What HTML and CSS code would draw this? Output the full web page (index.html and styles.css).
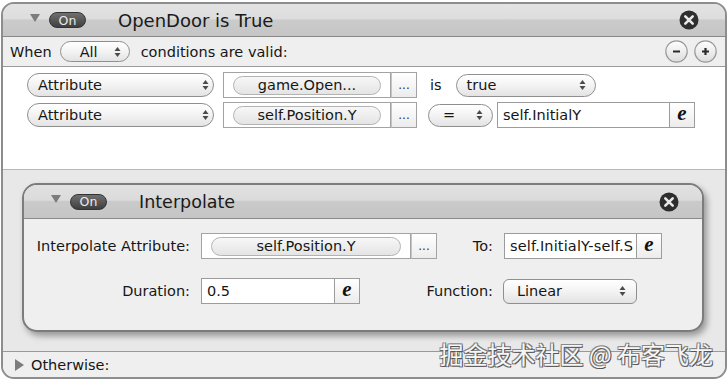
FILE: index.html
```html
<!DOCTYPE html>
<html>
<head>
<meta charset="utf-8">
<link rel="stylesheet" href="styles.css">
</head>
<body>
<div class="panel">
  <div class="hdr">
    <svg class="tri" width="10" height="8" viewBox="0 0 10 8"><path d="M0 0H10L5 8Z" fill="#7c7c7c"/></svg>
    <span class="on">On</span>
    <span class="title">OpenDoor is True</span>
    <svg class="close" width="20" height="20" viewBox="0 0 20 20"><circle cx="10" cy="10" r="9.5" fill="#2e2e2e"/><path d="M6.3 6.3L13.7 13.7M13.7 6.3L6.3 13.7" stroke="#e8e8e8" stroke-width="2.6" stroke-linecap="round"/></svg>
  </div>
  <div class="cond">
    <span>When</span>
    <div class="popup all"><span>All</span><svg class="arr" width="7" height="12" viewBox="0 0 7 12"><path d="M0.5 5L3.5 1L6.5 5Z M0.5 7L3.5 11L6.5 7Z" fill="#4a4a4a"/></svg></div>
    <span class="cv">conditions are valid:</span>
    <svg class="rb minus" width="23" height="23" viewBox="0 0 23 23"><defs><linearGradient id="g1" x1="0" y1="0" x2="0" y2="1"><stop offset="0" stop-color="#ffffff"/><stop offset="1" stop-color="#dcdcdc"/></linearGradient></defs><circle cx="11.5" cy="11.5" r="10.7" fill="url(#g1)" stroke="#9a9a9a" stroke-width="1.2"/><path d="M8 11.5H15" stroke="#2a2a2a" stroke-width="2.2"/></svg>
    <svg class="rb plus" width="23" height="23" viewBox="0 0 23 23"><circle cx="11.5" cy="11.5" r="10.7" fill="url(#g1)" stroke="#9a9a9a" stroke-width="1.2"/><path d="M8 11.5H15M11.5 8V15" stroke="#2a2a2a" stroke-width="2.2"/></svg>
  </div>
  <div class="rules">
    <div class="row">
      <div class="popup attr"><span>Attribute</span><svg class="arr" width="7" height="12" viewBox="0 0 7 12"><path d="M0.5 5L3.5 1L6.5 5Z M0.5 7L3.5 11L6.5 7Z" fill="#4a4a4a"/></svg></div>
      <div class="combo c1">
        <div class="fieldbox w168"><span class="pill">game.Open...</span></div>
        <div class="dots">...</div>
      </div>
      <span class="is">is</span>
      <div class="popup truep"><span>true</span><svg class="arr" width="7" height="12" viewBox="0 0 7 12"><path d="M0.5 5L3.5 1L6.5 5Z M0.5 7L3.5 11L6.5 7Z" fill="#4a4a4a"/></svg></div>
    </div>
    <div class="row">
      <div class="popup attr"><span>Attribute</span><svg class="arr" width="7" height="12" viewBox="0 0 7 12"><path d="M0.5 5L3.5 1L6.5 5Z M0.5 7L3.5 11L6.5 7Z" fill="#4a4a4a"/></svg></div>
      <div class="combo c1">
        <div class="fieldbox w168"><span class="pill">self.Position.Y</span></div>
        <div class="dots">...</div>
      </div>
      <div class="popup eqp"><span>=</span><svg class="arr" width="7" height="12" viewBox="0 0 7 12"><path d="M0.5 5L3.5 1L6.5 5Z M0.5 7L3.5 11L6.5 7Z" fill="#4a4a4a"/></svg></div>
      <div class="combo eqf">
        <div class="tfield w173">self.InitialY</div>
        <div class="ebtn">e</div>
      </div>
    </div>
  </div>
  <div class="actions">
    <div class="ip">
      <div class="ip-hdr">
        <svg class="tri" width="10" height="8" viewBox="0 0 10 8"><path d="M0 0H10L5 8Z" fill="#7c7c7c"/></svg>
        <span class="on">On</span>
        <span class="ip-title">Interpolate</span>
        <svg class="close" width="20" height="20" viewBox="0 0 20 20"><circle cx="10" cy="10" r="9.5" fill="#2e2e2e"/><path d="M6.3 6.3L13.7 13.7M13.7 6.3L6.3 13.7" stroke="#e8e8e8" stroke-width="2.6" stroke-linecap="round"/></svg>
      </div>
      <div class="ip-body">
        <span class="lbl">Interpolate Attribute:</span>
        <div class="combo">
          <div class="fieldbox w210"><span class="pill">self.Position.Y</span></div>
          <div class="dots">...</div>
        </div>
        <span class="lbl">To:</span>
        <div class="combo">
          <div class="tfield w133"><span class="clip">self.InitialY-self.S</span></div>
          <div class="ebtn">e</div>
        </div>
        <span class="lbl">Duration:</span>
        <div class="combo">
          <div class="tfield w134">0.5</div>
          <div class="ebtn">e</div>
        </div>
        <span class="lbl">Function:</span>
        <div class="popup linp"><span>Linear</span><svg class="arr" width="7" height="12" viewBox="0 0 7 12"><path d="M0.5 5L3.5 1L6.5 5Z M0.5 7L3.5 11L6.5 7Z" fill="#4a4a4a"/></svg></div>
      </div>
    </div>
  </div>
  <div class="other">
    <svg width="9" height="12" viewBox="0 0 9 12"><path d="M0 0L9 6L0 12Z" fill="#7c7c7c"/></svg>
    <span class="otxt">Otherwise:</span>
  </div>
  <div class="wm">掘金技术社区 @ 布客飞龙</div>
</div>
</body>
</html>
```
FILE: styles.css
```css
* { box-sizing: border-box; }
body {
  margin: 0;
  background: #fff;
  font-family: "DejaVu Sans", Verdana, sans-serif;
  font-size: 14.5px;
  color: #161616;
}
.panel {
  position: relative;
  margin: 2px 0 0 1px;
  width: 726px;
  height: 377px;
  border: 2px solid #8d8d8d;
  border-radius: 13px;
  overflow: hidden;
  display: flex;
  flex-direction: column;
  background: #e9e9e9;
}
.hdr {
  flex: none;
  height: 33px;
  display: flex;
  align-items: center;
  padding: 0 26px 0 27px;
  background: linear-gradient(#e3e3e3 0, #dddddd 46%, #cbcbcb 50%, #c5c5c5 100%);
  border-bottom: 1px solid #888;
}
.tri { flex: none; margin-bottom: 5px; }
.on {
  flex: none;
  margin-left: 9px;
  width: 37px;
  height: 16px;
  border-radius: 8px;
  background: linear-gradient(#707070, #3f3f3f);
  border: 1px solid #333;
  color: #eaeaea;
  font-size: 12.5px;
  display: flex;
  align-items: center;
  justify-content: center;
}
.title { margin-left: 32px; font-size: 18px; color: #1a1a1a; }
.close { margin-left: auto; flex: none; }
.cond {
  flex: none;
  height: 30px;
  display: flex;
  align-items: center;
  padding: 0 8px 0 7px;
  background: #efefef;
  border-bottom: 1px solid #9a9a9a;
}
.popup {
  flex: none;
  display: flex;
  align-items: center;
  justify-content: space-between;
  height: 23px;
  border: 1px solid #8f8f8f;
  border-radius: 12px;
  background: linear-gradient(#ffffff, #f3f3f3 50%, #e3e3e3);
  padding: 0 8px 0 10px;
}
.all { margin-left: 8px; width: 70px; height: 21px; padding-left: 19px; }
.cv { margin-left: 11px; }
.rb { flex: none; }
.minus { margin-left: auto; }
.plus { margin-left: 6px; }
.rules {
  flex: none;
  height: 103px;
  background: #fff;
  border-bottom: 1px solid #b8b8b8;
  padding: 5px 0 0 24px;
  display: flex;
  flex-direction: column;
  gap: 4px;
}
.row { display: flex; align-items: center; height: 26px; }
.attr { width: 187px; height: 24px; padding-right: 4px; }
.combo { display: flex; flex: none; }
.c1 { margin-left: 9px; }
.fieldbox {
  height: 26px;
  border: 1px solid #a3a3a3;
  background: #fff;
  display: flex;
  align-items: center;
  padding: 0 9px;
}
.w168 { width: 168px; }
.w210 { width: 210px; }
.pill {
  flex: 1;
  height: 19px;
  border: 1px solid #b3b3b3;
  border-radius: 10px;
  background: linear-gradient(#f7f7f7, #e4e4e4);
  display: flex;
  align-items: center;
  justify-content: center;
  white-space: nowrap;
}
.dots {
  width: 26px;
  height: 26px;
  border: 1px solid #a3a3a3;
  border-left-color: #c4c4c4;
  background: linear-gradient(#ffffff, #ececec);
  font-size: 12px;
  display: flex;
  align-items: flex-end;
  justify-content: center;
  padding-bottom: 5px;
  color: #333;
}
.is { margin-left: 13px; }
.truep { margin-left: 14px; width: 140px; padding-right: 9px; }
.eqp { margin-left: 11px; width: 65px; padding: 0 9px 0 14px; }
.eqf { margin-left: 4px; }
.tfield {
  height: 26px;
  border: 1px solid #9c9c9c;
  background: #fff;
  display: flex;
  align-items: center;
  padding-left: 5px;
  white-space: nowrap;
  overflow: hidden;
}
.clip { letter-spacing: 0.15px; }
.w173 { width: 173px; }
.w133 { width: 133px; }
.w134 { width: 134px; }
.ebtn {
  width: 25px;
  height: 26px;
  border: 1px solid #9c9c9c;
  border-left: none;
  background: linear-gradient(#ffffff, #ececec);
  font-family: "Liberation Serif", serif;
  font-weight: bold;
  font-style: italic;
  font-size: 21px;
  display: flex;
  align-items: center;
  justify-content: center;
  color: #111;
  line-height: 1;
  padding-bottom: 3px;
}
.actions {
  flex: none;
  height: 181px;
  padding: 13px 0 0 19px;
  background: #e8e8e8;
}
.ip {
  width: 682px;
  height: 149px;
  border: 2px solid #7c7c7c;
  border-radius: 15px;
  overflow: hidden;
  background: #efefef;
  box-shadow: 3px 4px 6px rgba(0, 0, 0, 0.35);
}
.ip-hdr {
  height: 34px;
  display: flex;
  align-items: center;
  padding: 0 23px 0 27px;
  background: linear-gradient(#e1e1e1 0, #dbdbdb 46%, #cacaca 50%, #c5c5c5 100%);
  border-bottom: 1px solid #8a8a8a;
}
.ip-title { margin-left: 32px; font-size: 17.5px; color: #1a1a1a; }
.ip-body {
  display: grid;
  grid-template-columns: 156px 236px 45px 158px;
  grid-auto-rows: 26px;
  column-gap: 11px;
  row-gap: 19px;
  align-items: center;
  padding: 14px 0 0 10px;
}
.lbl { justify-self: end; white-space: nowrap; }
.linp { width: 134px; height: 25px; border-radius: 6px; padding: 0 10px 0 13px; margin-left: -1px; }
.other {
  flex: none;
  height: 26px;
  border-top: 1px solid #999;
  display: flex;
  align-items: center;
  padding-left: 12px;
  background: #efefef;
}
.otxt { margin-left: 7px; }
.wm {
  position: absolute;
  right: 12px;
  top: 336px;
  font-family: "Noto Sans CJK SC", sans-serif;
  font-size: 24px;
  line-height: 28px;
  color: #f6f6f6;
  white-space: nowrap;
  text-shadow: 1px 1px 0 #555, -1px -1px 0 #888, 1px -1px 0 #777, -1px 1px 0 #777;
}
```
